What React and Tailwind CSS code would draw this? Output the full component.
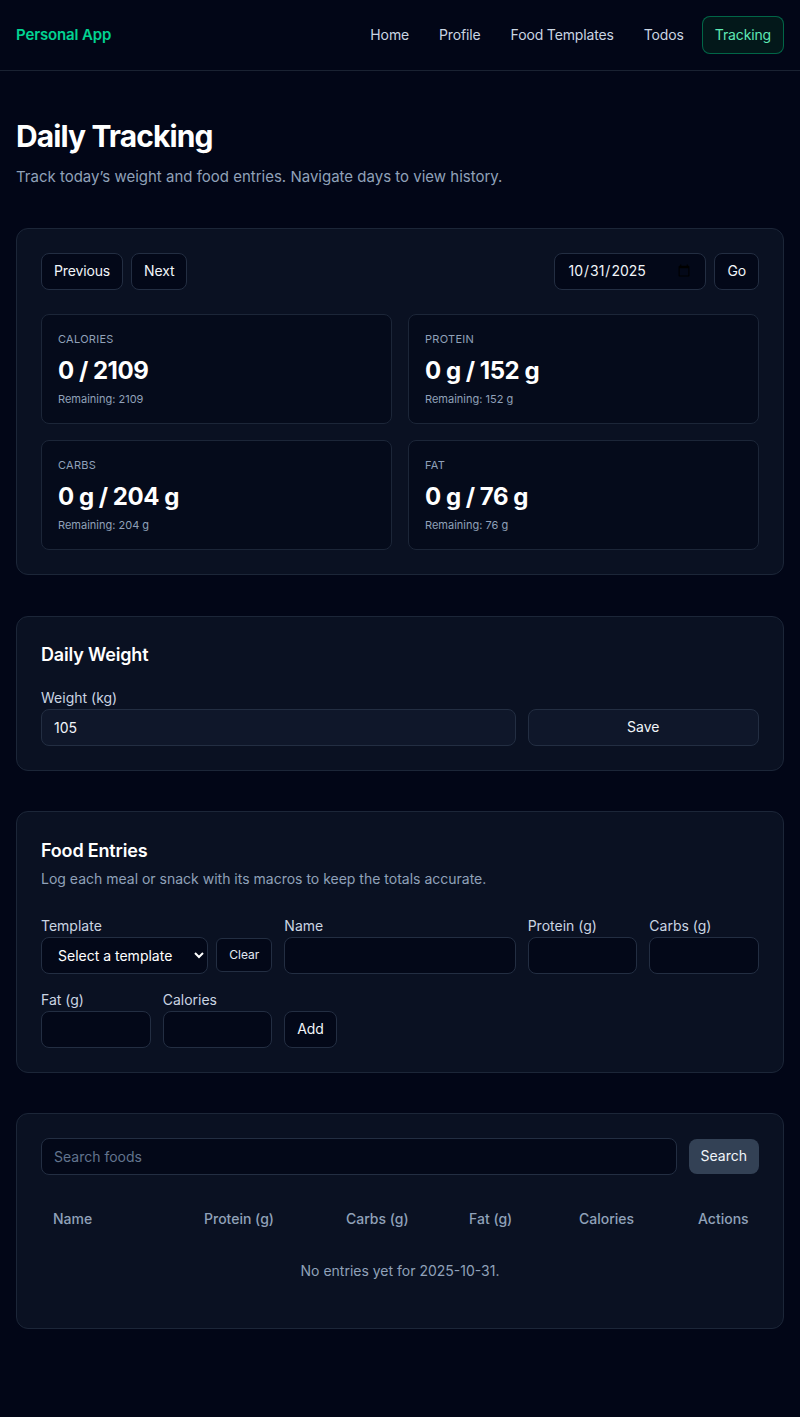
const navLinks = ["Home", "Profile", "Food Templates", "Todos"];

const stats = [
  { label: "Calories", value: "0 / 2109", remaining: "Remaining: 2109" },
  { label: "Protein", value: "0 g / 152 g", remaining: "Remaining: 152 g" },
  { label: "Carbs", value: "0 g / 204 g", remaining: "Remaining: 204 g" },
  { label: "Fat", value: "0 g / 76 g", remaining: "Remaining: 76 g" },
];

const columns = [
  { label: "Name", className: "w-[151px]" },
  { label: "Protein (g)", className: "w-[142px]" },
  { label: "Carbs (g)", className: "w-[123px]" },
  { label: "Fat (g)", className: "w-[110px]" },
  { label: "Calories", className: "w-[119px]" },
  { label: "Actions", className: "text-right" },
];

const card = "rounded-xl border border-[#1c2638] bg-[#0a1122] p-6";
const ghostButton =
  "h-[37px] rounded-lg border border-[#232e42] bg-[#030818] px-3 text-sm tracking-[-0.01em] text-slate-100";
const darkInput =
  "h-[37px] w-full rounded-lg border border-[#232e42] bg-[#030818] px-3 text-sm text-slate-100 outline-none";

const Field = ({ label, className, children }) => (
  <label className={className}>
    <span className="mb-px block text-sm leading-5 text-slate-300">{label}</span>
    {children}
  </label>
);

const StatCard = ({ stat }) => (
  <div className="rounded-lg border border-[#1c2638] bg-[#050b1b] p-4">
    <div className="text-[11px] uppercase leading-4 tracking-wide text-slate-400">{stat.label}</div>
    <div className="mt-2 text-2xl font-bold leading-8 tracking-[-0.02em] text-white">{stat.value}</div>
    <div className="mt-1 text-[11px] leading-4 text-slate-400">{stat.remaining}</div>
  </div>
);

export default function App() {
  return (
    <div className="min-h-screen bg-[#020617] font-['Inter',sans-serif] text-slate-100">
      <header className="border-b border-[#1a2232]">
        <div className="flex items-center justify-between px-4 py-4">
          <span className="text-[15px] font-semibold tracking-[-0.01em] text-emerald-400">Personal App</span>
          <nav className="flex items-center gap-1.5 text-sm tracking-[-0.01em]">
            {navLinks.map((link) => (
              <a key={link} className="px-3 py-2 text-slate-300">
                {link}
              </a>
            ))}
            <a className="flex h-[38px] items-center rounded-lg border border-emerald-600/60 bg-[#03181a] px-3 text-emerald-300">
              Tracking
            </a>
          </nav>
        </div>
      </header>

      <main className="px-4 pb-20 pt-[47px]">
        <h1 className="text-3xl font-bold tracking-[-0.03em] text-white">Daily Tracking</h1>
        <p className="mt-3 text-[15px] text-slate-400">
          Track today’s weight and food entries. Navigate days to view history.
        </p>

        <section className={`mt-[39px] ${card}`}>
          <div className="mb-6 flex items-center justify-between">
            <div className="flex gap-2">
              <button className={ghostButton}>Previous</button>
              <button className={ghostButton}>Next</button>
            </div>
            <div className="flex gap-2">
              <input
                type="date"
                defaultValue="2025-10-31"
                className="h-[37px] w-[152px] rounded-lg border border-[#232e42] bg-[#030818] px-3 text-sm text-slate-100 outline-none"
              />
              <button className={ghostButton}>Go</button>
            </div>
          </div>
          <div className="grid grid-cols-2 gap-4">
            {stats.map((stat) => (
              <StatCard key={stat.label} stat={stat} />
            ))}
          </div>
        </section>

        <section className={`mt-[41px] ${card}`}>
          <h2 className="mb-[19px] text-lg font-semibold tracking-[-0.01em] text-white">Daily Weight</h2>
          <div className="grid grid-cols-6 items-end gap-3">
            <Field label="Weight (kg)" className="col-span-4 block">
              <input
                defaultValue="105"
                className="h-[37px] w-full rounded-lg border border-[#232e42] bg-[#0f172a] px-3 text-sm text-slate-100 outline-none"
              />
            </Field>
            <button className="col-span-2 h-[37px] rounded-lg border border-[#232e42] bg-[#0f172a] text-sm text-slate-100">
              Save
            </button>
          </div>
        </section>

        <section className={`mt-10 ${card}`}>
          <h2 className="pt-px text-lg font-semibold tracking-[-0.01em] text-white">Food Entries</h2>
          <p className="mt-1 text-sm text-slate-400">
            Log each meal or snack with its macros to keep the totals accurate.
          </p>
          <div className="mt-[27px] grid grid-cols-6 gap-x-3 gap-y-4">
            <Field label="Template" className="col-span-2 block">
              <div className="flex items-center gap-2">
                <select className="h-[37px] flex-1 rounded-lg border border-[#232e42] bg-[#030818] px-3 text-sm text-white outline-none">
                  <option>Select a template</option>
                </select>
                <button className="h-[34px] rounded-md border border-[#232e42] bg-[#030818] px-3 text-xs text-slate-200">
                  Clear
                </button>
              </div>
            </Field>
            <Field label="Name" className="col-span-2 block">
              <input className={darkInput} />
            </Field>
            <Field label="Protein (g)" className="block">
              <input className={darkInput} />
            </Field>
            <Field label="Carbs (g)" className="block">
              <input className={darkInput} />
            </Field>
            <Field label="Fat (g)" className="block">
              <input className={darkInput} />
            </Field>
            <Field label="Calories" className="block">
              <input className={darkInput} />
            </Field>
            <div className="flex items-end">
              <button className={ghostButton}>Add</button>
            </div>
          </div>
        </section>

        <section className={`mt-10 ${card}`}>
          <div className="flex items-center gap-3">
            <input
              placeholder="Search foods"
              className="h-[37px] flex-1 rounded-lg border border-[#232e42] bg-[#030818] px-3 text-sm text-slate-100 outline-none placeholder:text-slate-500"
            />
            <button className="h-[35px] rounded-lg bg-[#334155] px-3 text-sm text-slate-100">Search</button>
          </div>
          <table className="mt-[22px] w-full table-fixed text-sm">
            <thead>
              <tr>
                {columns.map((col) => (
                  <th key={col.label} className={`px-3 py-3 text-left font-medium text-slate-400 ${col.className}`}>
                    {col.label}
                  </th>
                ))}
              </tr>
            </thead>
            <tbody>
              <tr>
                <td colSpan={6} className="px-3 pb-[23px] pt-5 text-center text-slate-400">
                  No entries yet for 2025-10-31.
                </td>
              </tr>
            </tbody>
          </table>
        </section>
      </main>
    </div>
  );
}
